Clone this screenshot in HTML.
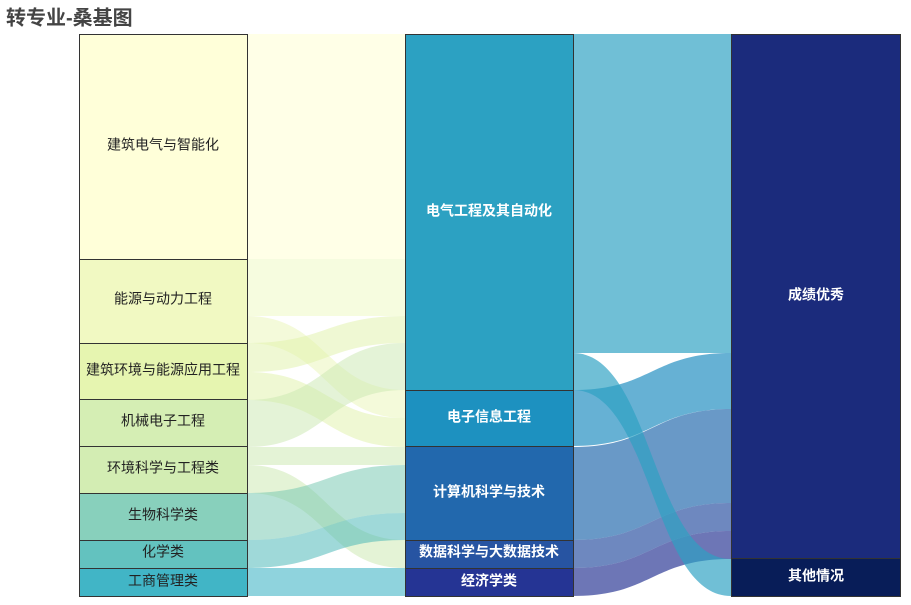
<!DOCTYPE html>
<html><head><meta charset="utf-8"><style>
html,body{margin:0;padding:0;background:#fff;width:911px;height:605px;overflow:hidden}
svg{display:block}
text{font-family:"Liberation Sans","Noto Sans CJK SC",sans-serif;font-size:14px;dominant-baseline:middle;text-anchor:middle}
.w{fill:#fff;font-weight:bold}
.lf path{fill-opacity:0.5}
.mf path{fill-opacity:0.68}
</style></head><body>
<svg width="911" height="605" viewBox="0 0 911 605">
<text x="6" y="19" style="text-anchor:start;font-size:20px;font-weight:bold;fill:#444">转专业-桑基图</text>
<g class="lf">
<path d="M247 34 L405 34 L405 259 L247 259Z" fill="#ffffd0"/>
<path d="M247 259 L405 259 L405 316 L247 316Z" fill="#eef9c0"/>
<path d="M247 316 C326 316 326 390 405 390 L405 418 C326 418 326 343 247 343Z" fill="#e9f6b5"/>
<path d="M247 343 C326 343 326 316 405 316 L405 343 C326 343 326 372 247 372Z" fill="#e0f2a8"/>
<path d="M247 372 C326 372 326 418 405 418 L405 447 C326 447 326 400 247 400Z" fill="#e0f2a8"/>
<path d="M247 400 C326 400 326 343 405 343 L405 390 C326 390 326 447 247 447Z" fill="#cae8b0"/>
<path d="M247 447 L405 447 L405 465 L247 465Z" fill="#c9e8ae"/>
<path d="M247 465 C326 465 326 540 405 540 L405 568 C326 568 326 493 247 493Z" fill="#c9e8ae"/>
<path d="M247 493 C326 493 326 465 405 465 L405 513 C326 513 326 540 247 540Z" fill="#6fc6ad"/>
<path d="M247 540 C326 540 326 513 405 513 L405 540 C326 540 326 568 247 568Z" fill="#3fb3b3"/>
<path d="M247 568 L405 568 L405 596 L247 596Z" fill="#20a8bb"/>
</g>
<g class="mf">
<path d="M573 34 L731 34 L731 353 L573 353Z" fill="#2ca1c2"/>
<path d="M573 390 C652 390 652 353 731 353 L731 409 C652 409 652 446 573 446Z" fill="#1d8cc0"/>
<path d="M573 447 C652 447 652 409 731 409 L731 503 C652 503 652 540 573 540Z" fill="#2268ad"/>
<path d="M573 540 C652 540 652 503 731 503 L731 531 C652 531 652 568 573 568Z" fill="#2a4fa0"/>
<path d="M573 568 C652 568 652 531 731 531 L731 559 C652 559 652 596 573 596Z" fill="#283593"/>
<path d="M573 353 C652 353 652 559 731 559 L731 596 C652 596 652 390 573 390Z" fill="#2ca1c2"/>
</g>
<g stroke="#333" stroke-width="1">
<rect x="79.5" y="34.5" width="168" height="225" fill="#ffffd9"/>
<rect x="79.5" y="259.5" width="168" height="84" fill="#f1f9c2"/>
<rect x="79.5" y="343.5" width="168" height="56" fill="#e6f5b0"/>
<rect x="79.5" y="399.5" width="168" height="47" fill="#d5eeb4"/>
<rect x="79.5" y="446.5" width="168" height="47" fill="#d3edb3"/>
<rect x="79.5" y="493.5" width="168" height="47" fill="#88d0bc"/>
<rect x="79.5" y="540.5" width="168" height="28" fill="#63c2bf"/>
<rect x="79.5" y="568.5" width="168" height="28" fill="#41b5c6"/>
<rect x="405.5" y="34.5" width="168" height="356" fill="#2ca1c2"/>
<rect x="405.5" y="390.5" width="168" height="56" fill="#1d91c0"/>
<rect x="405.5" y="446.5" width="168" height="94" fill="#2268ad"/>
<rect x="405.5" y="540.5" width="168" height="28" fill="#2754a2"/>
<rect x="405.5" y="568.5" width="168" height="28" fill="#253494"/>
<rect x="731.5" y="34.5" width="169" height="524" fill="#1b2b7c"/>
<rect x="731.5" y="558.5" width="169" height="38" fill="#081d58"/>
</g>
<g fill="#222" style="font-size:14.5px">
<text x="163" y="146">建筑电气与智能化</text>
<text x="163" y="300">能源与动力工程</text>
<text x="163" y="371">建筑环境与能源应用工程</text>
<text x="163" y="422">机械电子工程</text>
<text x="163" y="469">环境科学与工程类</text>
<text x="163" y="516">生物科学类</text>
<text x="163" y="553">化学类</text>
<text x="163" y="582">工商管理类</text>
</g>
<text class="w" x="489" y="212">电气工程及其自动化</text>
<text class="w" x="489" y="418">电子信息工程</text>
<text class="w" x="489" y="493">计算机科学与技术</text>
<text class="w" x="489" y="553">数据科学与大数据技术</text>
<text class="w" x="489" y="582">经济学类</text>
<text class="w" x="816" y="296">成绩优秀</text>
<text class="w" x="816" y="577">其他情况</text>
</svg>
</body></html>
